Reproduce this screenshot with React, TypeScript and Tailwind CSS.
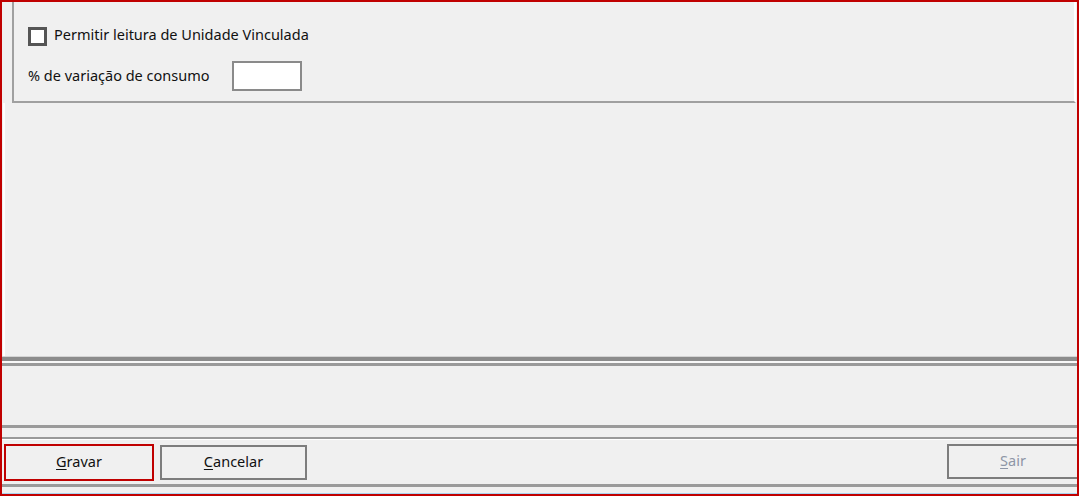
import React from "react";

const font = { fontFamily: '"Segoe UI", "Noto Sans", "Open Sans", sans-serif' };

function Button({
  hotkey,
  rest,
  className,
  disabled,
}: {
  hotkey: string;
  rest: string;
  className: string;
  disabled?: boolean;
}) {
  return (
    <button
      className={`flex items-center justify-center bg-[#f0f0f0] text-[14.5px] ${
        disabled ? "text-[#8e96a6]" : "text-[#111]"
      } ${className}`}
    >
      <span>
        <span className="underline underline-offset-2">{hotkey}</span>
        {rest}
      </span>
    </button>
  );
}

export default function App() {
  return (
    <div
      className="w-[1079px] h-[496px] border-2 border-[#c00000] bg-[#f0f0f0] flex flex-col overflow-hidden"
      style={font}
    >
      {/* Top panel with group box */}
      <div className="h-[101px] flex pl-[10px] pr-[1px]">
        <div className="flex-1 border-l-2 border-b-2 border-r-2 border-l-[#a0a0a0] border-b-[#a0a0a0] border-r-white flex flex-col pl-[14px] pt-[25px]">
          <label className="flex items-center gap-[7px] h-[19px]">
            <span className="w-[19px] h-[19px] border-[3px] border-[#555] bg-white" />
            <span className="text-[14.5px] text-[#111] -mt-[3px]">Permitir leitura de Unidade Vinculada</span>
          </label>
          <div className="flex items-center mt-[15px]">
            <span className="text-[14.5px] text-[#111] w-[204px]">% de variação de consumo</span>
            <div className="w-[70px] h-[30px] border-2 border-[#8a8a8a] bg-white" />
          </div>
        </div>
      </div>

      {/* Main empty panel */}
      <div className="h-[253px] ml-px border-l-2 border-white" />

      {/* Splitter */}
      <div className="h-px bg-[#d4d4d4]" />
      <div className="h-[4px] bg-[#8c8c8c]" />
      <div className="h-[2px] bg-[#f8f8f8]" />
      <div className="h-[3px] bg-[#9a9a9a]" />

      {/* Lower empty panel */}
      <div className="h-[59px]" />
      <div className="h-[3px] bg-[#9a9a9a]" />
      <div className="h-[9px]" />
      <div className="h-[2px] bg-[#9a9a9a]" />
      <div className="h-px bg-white" />

      {/* Button bar */}
      <div className="h-[44px] flex items-center pl-[2px] pr-0">
        <Button hotkey="G" rest="ravar" className="w-[150px] h-[37px] border-2 border-[#c00000]" />
        <Button hotkey="C" rest="ancelar" className="w-[147px] h-[35px] ml-[6px] border-2 border-[#7d7d7d]" />
        <div className="flex-1" />
        <Button hotkey="S" rest="air" disabled className="w-[130px] h-[35px] border-2 border-r-0 border-[#7d7d7d] -mt-[2px]" />
      </div>

      <div className="h-[3px] bg-[#9a9a9a]" />
      <div className="flex-1" />
      <div className="h-px bg-[#a8d4f0]" />
    </div>
  );
}
